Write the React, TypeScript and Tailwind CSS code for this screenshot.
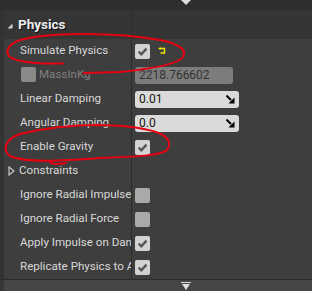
import React from "react";

const Check: React.FC<{ on?: boolean; disabled?: boolean }> = ({ on, disabled }) => (
  <div
    className={
      "w-[15px] h-[15px] rounded-[2px] flex items-center justify-center " +
      (disabled ? "bg-[#8a8a8a]" : on ? "bg-[#d2d2d2]" : "bg-[#a9a9a9]")
    }
  >
    {on && (
      <svg width="11" height="11" viewBox="0 0 10 10">
        <path d="M1.5 5.2 L4 7.6 L8.6 2.4" fill="none" stroke="#555" strokeWidth="2.2" />
      </svg>
    )}
  </div>
);

const SpinIcon = () => (
  <svg width="9" height="9" viewBox="0 0 9 9" className="shrink-0">
    <path d="M0.5 0.5 L5 5" stroke="#000" strokeWidth="2" />
    <polygon points="8.5,2.5 8.5,8.5 2.5,8.5" fill="#000" />
  </svg>
);

const Field: React.FC<{ value: string }> = ({ value }) => (
  <div className="w-[104px] h-[17px] rounded-[3px] bg-[#dadada] flex items-center justify-between pl-[4px] pr-[4px] text-[12px] text-[#151515]">
    <span>{value}</span>
    <SpinIcon />
  </div>
);

const Row: React.FC<{ label: React.ReactNode; children?: React.ReactNode }> = ({ label, children }) => (
  <div className="h-[24px] flex">
    <div className="w-[127px] flex items-center overflow-hidden whitespace-nowrap">{label}</div>
    <div className="w-px bg-[#2b2b2b]" />
    <div className="w-px" />
    <div className="flex-1 flex items-center pl-[2px]">{children}</div>
  </div>
);

const Label: React.FC<{ text: string }> = ({ text }) => (
  <span className="pl-[16px] text-[11.6px] text-[#d8d8d8]">{text}</span>
);

const App: React.FC = () => {
  return (
    <div className="w-[312px] h-[291px] relative overflow-hidden bg-[#3e3e3e] flex flex-col font-['Roboto','Liberation_Sans',sans-serif]">
      {/* top scroll bar */}
      <div className="h-[10px] bg-[#2e2e2e] pl-[181px]">
        <svg width="10" height="5" viewBox="0 0 10 5">
          <polygon points="0,0 10,0 5,5" fill="#dedede" />
        </svg>
      </div>

      <div className="flex flex-1">
        <div className="w-[4px] bg-[#333333]" />
        <div className="flex-1 flex flex-col">
          {/* category header */}
          <div className="h-[29px] flex bg-[#353535] rounded-tl-[2px]">
            <div className="w-[127px] flex items-center pl-[3px] gap-[5px]">
              <svg width="6" height="6" viewBox="0 0 6 6" className="mt-[2px]">
                <polygon points="5.5,0.5 5.5,5.5 0.5,5.5" fill="#cfcfcf" />
              </svg>
              <span className="text-[13.5px] font-bold text-[#ececec] [text-shadow:1px_1px_0_#111]">Physics</span>
            </div>
            <div className="w-px bg-[#2b2b2b]" />
          </div>

          <Row label={<Label text="Simulate Physics" />}>
            <Check on />
            <svg width="9" height="8" viewBox="0 0 9 8" className="ml-[8px] mt-[-1px]">
              <path d="M2 1.5 H6.5 V6 H2.5" fill="none" stroke="#f2e600" strokeWidth="1.4" />
              <polygon points="0,1.5 2.6,0 2.6,3" fill="#f2e600" />
            </svg>
          </Row>
          <Row
            label={
              <div className="flex items-center pl-[17px] gap-[3px]">
                <Check disabled />
                <span className="text-[11.6px] text-[#808080]">MassInKg</span>
              </div>
            }
          >
            <div className="w-[98px] h-[17px] rounded-[3px] bg-[#7c7c7c] flex items-center pl-[4px] text-[12px] text-[#333]">
              2218.766602
            </div>
          </Row>
          <Row label={<Label text="Linear Damping" />}>
            <Field value="0.01" />
          </Row>
          <Row label={<Label text="Angular Damping" />}>
            <Field value="0.0" />
          </Row>
          <Row label={<Label text="Enable Gravity" />}>
            <Check on />
          </Row>
          <Row
            label={
              <div className="flex items-center pl-[4px] gap-[4px]">
                <svg width="7" height="10" viewBox="0 0 7 10">
                  <polygon points="1,1 6,5 1,9" fill="none" stroke="#cfcfcf" strokeWidth="1.1" />
                </svg>
                <span className="text-[11.6px] text-[#d8d8d8]">Constraints</span>
              </div>
            }
          />
          <Row label={<Label text="Ignore Radial Impulse" />}>
            <Check />
          </Row>
          <Row label={<Label text="Ignore Radial Force" />}>
            <Check />
          </Row>
          <Row label={<Label text="Apply Impulse on Damage" />}>
            <Check on />
          </Row>
          <Row label={<Label text="Replicate Physics to Autonomous Proxy" />}>
            <Check on />
          </Row>
        </div>
      </div>

      {/* bottom scroll bar */}
      <div className="h-px bg-[#2a2a2a]" />
      <div className="h-[11px] flex">
        <div className="w-[4px] bg-[#383838]" />
        <div className="flex-1 bg-[#464646] pl-[177px] pt-[2px] flex flex-col">
          <div className="w-[10px] h-px bg-[#e0e0e0]" />
          <svg width="10" height="6" viewBox="0 0 10 6" className="mt-[1px]">
            <polygon points="1,0 9,0 5,6" fill="#e0e0e0" />
          </svg>
        </div>
      </div>

      {/* red annotations drawn over the panel */}
      <svg className="absolute inset-0 pointer-events-none" width="312" height="291" viewBox="0 0 312 291">
        <g fill="none" stroke="#e60012" strokeWidth="2" strokeLinecap="round">
          <path d="M63 63.5 C45 64 18 63 10 57 C4 51 9 44 20 40 C45 33 110 31 160 40 C180 44 187 50 183 57 C178 64 150 69 120 72 L84 73" />
          <path d="M100 125 C70 125 40 129 20 134 C5 139 2 150 10 156 C25 163 60 161 100 158 C130 157 160 156 167 150 C172 143 168 136 156 132 C140 127 120 125 95 125" />
          <path d="M50 161 C50 164 55 165 66 163" />
        </g>
      </svg>
    </div>
  );
};

export default App;
